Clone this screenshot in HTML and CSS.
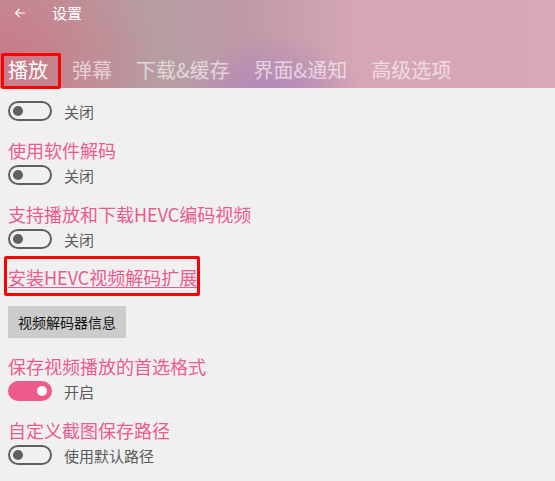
FILE: index.html
```html
<!DOCTYPE html>
<html lang="zh">
<head>
<meta charset="utf-8">
<title>设置</title>
<link rel="stylesheet" href="styles.css">
</head>
<body>
<div class="app">
  <header class="header">
    <div class="titlebar">
      <svg class="back" width="12" height="10" viewBox="0 0 12 10"><path d="M11 5H1.5M5.5 1L1.5 5L5.5 9" fill="none" stroke="#fff" stroke-width="1.1"/></svg>
      <span class="title">设置</span>
    </div>
    <nav class="tabs">
      <span class="tab active marked">播放</span>
      <span class="tab">弹幕</span>
      <span class="tab">下载&amp;缓存</span>
      <span class="tab">界面&amp;通知</span>
      <span class="tab">高级选项</span>
    </nav>
  </header>
  <main class="content">
    <div class="row"><span class="toggle"></span><span class="label">关闭</span></div>
    <div class="heading gap">使用软件解码</div>
    <div class="row"><span class="toggle"></span><span class="label">关闭</span></div>
    <div class="heading gap">支持播放和下载HEVC编码视频</div>
    <div class="row"><span class="toggle"></span><span class="label">关闭</span></div>
    <div class="link-wrap"><a class="link marked2">安装HEVC视频解码扩展</a></div>
    <div><button class="btn">视频解码器信息</button></div>
    <div class="heading gap2">保存视频播放的首选格式</div>
    <div class="row"><span class="toggle on"></span><span class="label">开启</span></div>
    <div class="heading gap">自定义截图保存路径</div>
    <div class="row"><span class="toggle"></span><span class="label">使用默认路径</span></div>
  </main>
</div>
</body>
</html>
```
FILE: styles.css
```css
html, body {
  margin: 0;
  padding: 0;
  background: #f0f0f0;
  font-family: "Noto Sans CJK SC", "Noto Sans", sans-serif;
}
.app {
  width: 555px;
  height: 481px;
  overflow: hidden;
}
.header {
  height: 88px;
  background:
    radial-gradient(ellipse 90px 60px at 270px 95px, rgba(176,130,190,0.85), rgba(176,130,190,0) 100%),
    radial-gradient(ellipse 160px 110px at 0px 60px, rgba(200,120,135,0.9), rgba(200,120,135,0) 100%),
    linear-gradient(90deg, #c49098 0%, #b59ea2 28%, #c09aa8 45%, #d6a6b6 65%, #d8a8b8 100%);
  display: flex;
  flex-direction: column;
}
.titlebar {
  height: 26px;
  display: flex;
  align-items: center;
  padding-left: 14px;
}
.title {
  color: #fff;
  font-size: 15px;
  margin-left: 26px;
  line-height: 26px;
}
.tabs {
  display: flex;
  margin-top: 26px;
  padding-left: 8px;
  gap: 24px;
}
.tab {
  font-size: 20px;
  line-height: 36px;
  color: rgba(255,255,255,0.62);
  position: relative;
  white-space: nowrap;
}
.tab.active { color: #fff; }
.marked::after {
  content: "";
  position: absolute;
  left: -7px;
  right: -13px;
  top: 1px;
  bottom: -1px;
  border: 3px solid #ff0000;
  border-radius: 2px;
}
.content {
  padding: 10px 8px 0 8px;
}
.row {
  height: 26px;
  display: flex;
  align-items: center;
}
.toggle {
  box-sizing: border-box;
  width: 44px;
  height: 20px;
  border: 2px solid #5f5f5f;
  border-radius: 10px;
  position: relative;
  flex: none;
}
.toggle::after {
  content: "";
  position: absolute;
  width: 10px;
  height: 10px;
  border-radius: 50%;
  background: #5f5f5f;
  left: 3px;
  top: 3px;
}
.toggle.on {
  background: #ef5a8e;
  border-color: #ef5a8e;
}
.toggle.on::after {
  background: #fff;
  left: auto;
  right: 3px;
}
.label {
  margin-left: 12px;
  font-size: 15px;
  color: #5a5a5a;
}
.heading {
  font-size: 18px;
  line-height: 24px;
  color: #ec5b8d;
}
.gap { margin-top: 14px; }
.gap2 { margin-top: 16px; }
.link-wrap {
  margin-top: 13px;
  height: 24px;
}
.link {
  font-size: 18px;
  line-height: 24px;
  color: #ec5b8d;
  text-decoration: underline;
  text-decoration-thickness: 1px;
  text-underline-offset: 2px;
  position: relative;
  display: inline-block;
}
.marked2::after {
  content: "";
  position: absolute;
  left: -4px;
  right: -3px;
  top: -9px;
  bottom: -7px;
  border: 3px solid #ff0000;
  border-radius: 2px;
}
.btn {
  margin-top: 17px;
  height: 32px;
  width: 118px;
  border: none;
  background: #cccccc;
  font-family: "Noto Sans CJK SC", sans-serif;
  font-size: 14px;
  color: #111;
  padding: 0;
}
```
